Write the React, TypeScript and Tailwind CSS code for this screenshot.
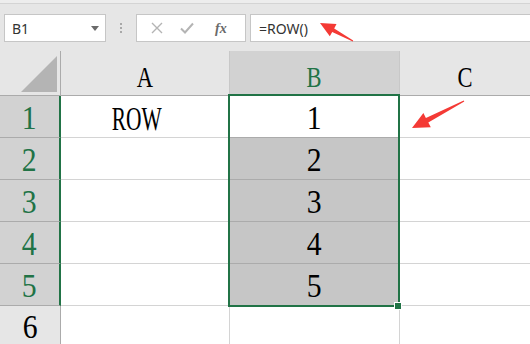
import React from 'react';

const serif = { fontFamily: '"Liberation Serif", "Times New Roman", serif' };
const sans = { fontFamily: '"Noto Sans", "Liberation Sans", Arial, sans-serif' };

const rows = [1, 2, 3, 4, 5];

function RowHeader({ n, selected }: { n: number; selected: boolean }) {
  return (
    <div
      className={
        selected
          ? 'w-[61px] shrink-0 bg-[#d2d2d2] border-r-2 border-r-[#217346] border-b border-b-[#ababab] flex items-center justify-center pt-[4px] text-[#217346]'
          : 'w-[61px] shrink-0 bg-[#e6e6e6] border-r border-r-[#ababab] flex items-center justify-center pt-[4px] text-black'
      }
    >
      <span className="inline-block text-[33px] leading-none scale-x-90" style={serif}>
        {n}
      </span>
    </div>
  );
}

export default function App() {
  return (
    <div className="relative w-[530px] h-[344px] overflow-hidden bg-white select-none">
      {/* toolbar */}
      <div className="h-[51px] bg-[#e6e6e6] flex flex-col">
        <div className="h-[4px] bg-[#ededed] border-b border-[#d4d4d4]" />
        <div className="flex items-center h-[28px] mt-[10px]">
          <div
            className="ml-[4px] w-[102px] h-[28px] bg-white border border-[#c6c6c6] flex items-center justify-between pl-[7px] pr-[6px] text-[14px] text-[#333]"
            style={sans}
          >
            <span>B1</span>
            <svg width="8" height="5" viewBox="0 0 8 5">
              <path d="M0 0h8L4 5z" fill="#6b6b6b" />
            </svg>
          </div>
          <div className="w-[30px] flex flex-col items-center gap-[2px]">
            <div className="w-[2px] h-[2px] bg-[#a8a8a8]" />
            <div className="w-[2px] h-[2px] bg-[#a8a8a8]" />
            <div className="w-[2px] h-[2px] bg-[#a8a8a8]" />
          </div>
          <div className="w-[110px] h-[28px] bg-white border border-[#c6c6c6] flex items-center">
            <svg width="12" height="12" viewBox="0 0 12 12" className="ml-[14px]">
              <path d="M1 1L11 11M11 1L1 11" stroke="#b4b4b4" strokeWidth="1.4" />
            </svg>
            <svg width="14" height="12" viewBox="0 0 14 12" className="ml-[17px]">
              <path d="M1 6.5L5 10.5L13 1.5" stroke="#b4b4b4" strokeWidth="2" fill="none" />
            </svg>
            <span className="ml-[21px] italic text-[14px] text-[#6a6a6a] font-bold" style={serif}>
              fx
            </span>
          </div>
          <div
            className="ml-[4px] flex-1 h-[28px] bg-white border border-r-0 border-[#c6c6c6] flex items-center pl-[8px] text-[14px] text-[#333]"
            style={sans}
          >
            =ROW()
          </div>
        </div>
      </div>

      {/* column headers */}
      <div className="flex h-[45px] border-b border-[#ababab]">
        <div className="w-[61px] shrink-0 bg-[#e6e6e6] border-r border-[#ababab] relative">
          <svg width="61" height="44" viewBox="0 0 61 44" className="absolute left-0 top-0">
            <path d="M21 41L57 5V41z" fill="#b4b4b4" />
          </svg>
        </div>
        <div className="w-[169px] shrink-0 bg-[#e6e6e6] border-r border-[#c8c8c8] flex items-center justify-center pt-[8px]">
          <span className="inline-block text-[30px] leading-none scale-x-75 text-black" style={serif}>
            A
          </span>
        </div>
        <div className="w-[170px] shrink-0 bg-[#d2d2d2] border-r border-[#c8c8c8] flex items-center justify-center pt-[8px]">
          <span className="inline-block text-[30px] leading-none scale-x-75 text-[#217346]" style={serif}>
            B
          </span>
        </div>
        <div className="flex-1 bg-[#e6e6e6] flex items-center justify-center pt-[8px]">
          <span className="inline-block text-[30px] leading-none scale-x-75 text-black" style={serif}>
            C
          </span>
        </div>
      </div>

      {/* rows */}
      {rows.map((n) => (
        <div key={n} className="flex h-[42px]">
          <RowHeader n={n} selected />
          <div className="w-[169px] shrink-0 border-r border-b border-[#d4d4d4] flex items-center justify-center pt-[4px]">
            {n === 1 && (
              <span className="inline-block mr-[17px] text-[34px] leading-none scale-x-[0.63]" style={serif}>
                ROW
              </span>
            )}
          </div>
          <div
            className={
              n === 1
                ? 'w-[170px] shrink-0 bg-white border-r border-b border-[#ababab] flex items-center justify-center pt-[4px]'
                : 'w-[170px] shrink-0 bg-[#c6c6c6] border-r border-b border-[#ababab] flex items-center justify-center pt-[4px]'
            }
          >
            <span className="inline-block text-[33px] leading-none scale-x-90" style={serif}>
              {n}
            </span>
          </div>
          <div className="flex-1 border-b border-[#d4d4d4]" />
        </div>
      ))}
      <div className="flex h-[39px]">
        <RowHeader n={6} selected={false} />
        <div className="w-[169px] shrink-0 border-r border-[#d4d4d4]" />
        <div className="w-[170px] shrink-0 border-r border-[#d4d4d4]" />
        <div className="flex-1" />
      </div>

      {/* selection outline */}
      <div className="absolute left-[228px] top-[94px] w-[172px] h-[213px] border-2 border-[#217346] pointer-events-none" />
      <div className="absolute left-[394px] top-[302px] w-[8px] h-[8px] bg-[#217346] border border-white" />

      {/* annotation arrows */}
      <svg className="absolute left-0 top-0 pointer-events-none" width="530" height="344" viewBox="0 0 530 344">
        <polygon
          points="320,23 336.5,24.1 334.2,28.4 353.2,40.6 352.8,41.4 332.2,32 329.8,36.3"
          fill="#f43a35"
        />
        <polygon
          points="412,128 423.4,113.1 425.9,118 463.7,100.4 464.3,101.6 428.3,122.4 430.8,127.3"
          fill="#f43a35"
        />
      </svg>
    </div>
  );
}
